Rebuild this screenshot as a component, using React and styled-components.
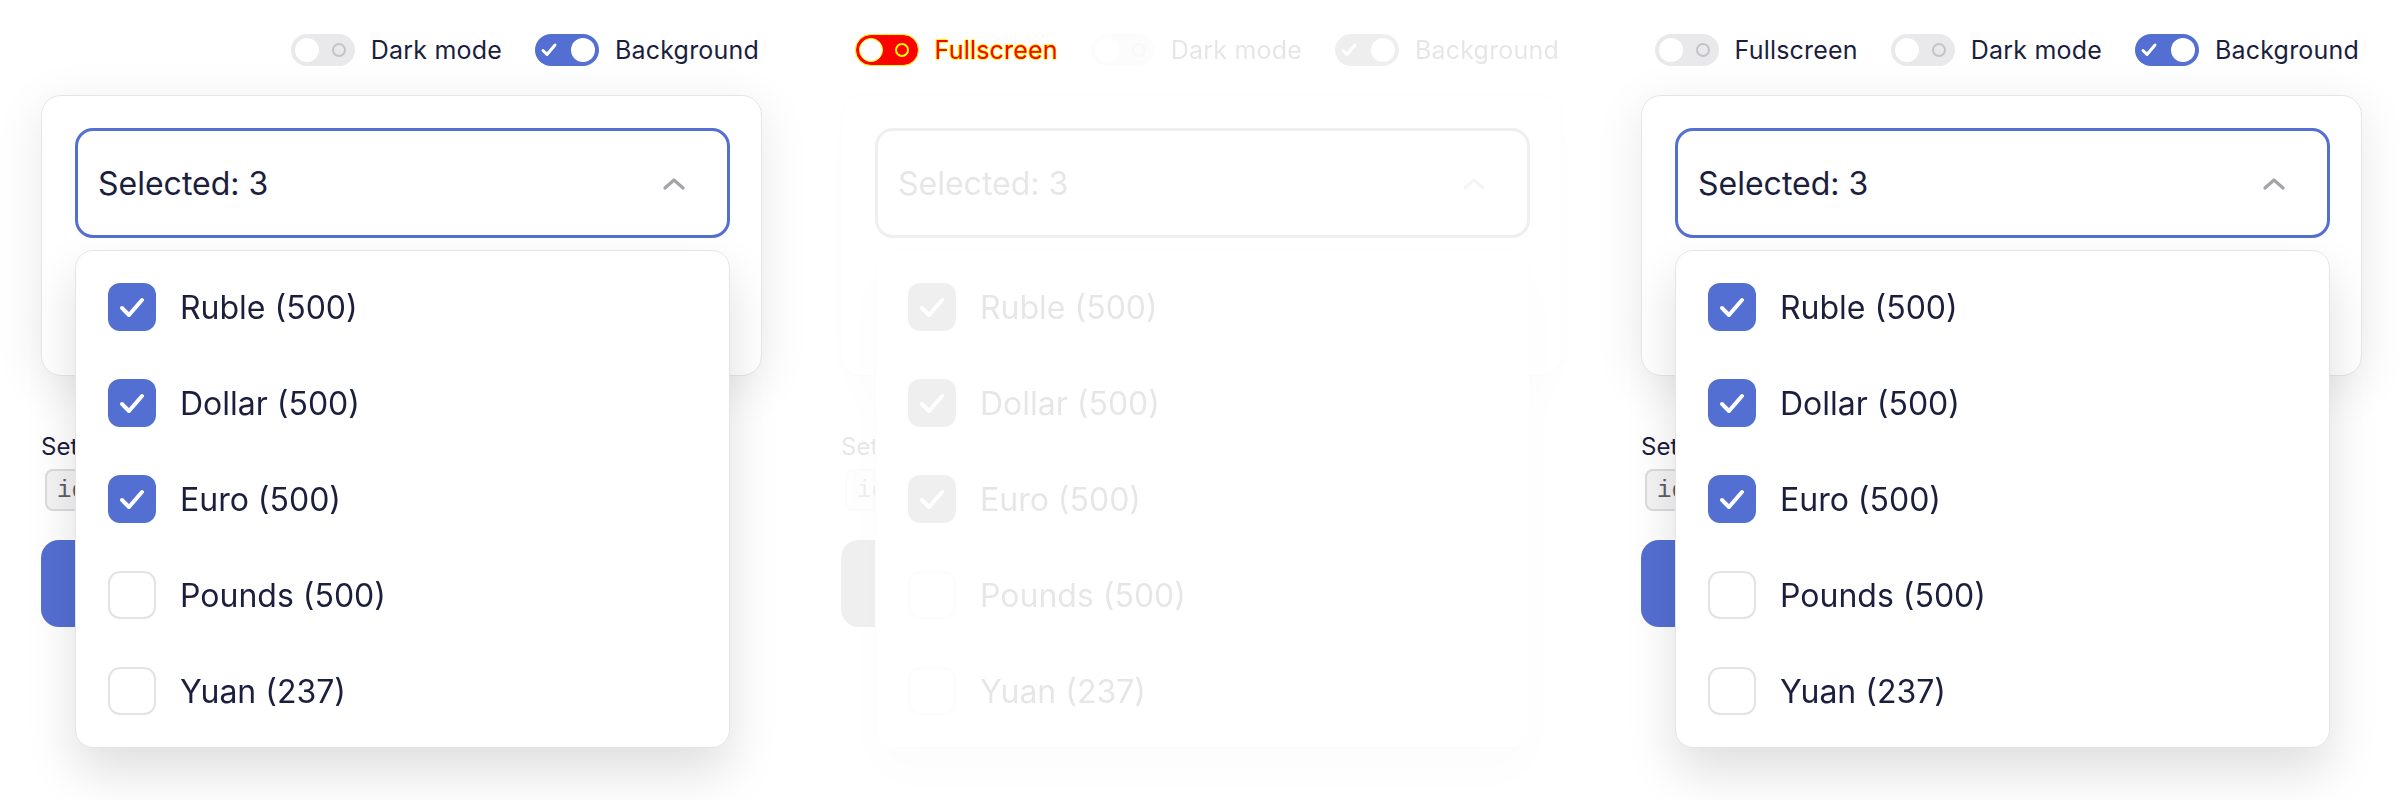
import React from 'react';
import styled, { createGlobalStyle, css } from 'styled-components';

const GlobalStyle = createGlobalStyle`
  html, body {
    margin: 0;
    padding: 0;
    background: #ffffff;
  }
  body {
    font-family: Inter, "Noto Sans", sans-serif;
    color: #1b1e3d;
  }
`;

const BLUE = '#536fd2';
const INK = '#1b1e3d';

const options = [
  { label: 'Ruble (500)', checked: true },
  { label: 'Dollar (500)', checked: true },
  { label: 'Euro (500)', checked: true },
  { label: 'Pounds (500)', checked: false },
  { label: 'Yuan (237)', checked: false },
];

const panels = [
  {
    toggles: [
      { label: 'Dark mode', on: false },
      { label: 'Background', on: true },
    ],
    dim: false,
  },
  {
    toggles: [
      { label: 'Fullscreen', on: false, alert: true },
      { label: 'Dark mode', on: false, dim: true },
      { label: 'Background', on: true, dim: true },
    ],
    dim: true,
  },
  {
    toggles: [
      { label: 'Fullscreen', on: false },
      { label: 'Dark mode', on: false },
      { label: 'Background', on: true },
    ],
    dim: false,
  },
];

const dimmed = css`
  opacity: 0.11;
  filter: grayscale(1);
`;

const Page = styled.div`
  display: flex;
  width: 2400px;
  height: 800px;
  overflow: hidden;
`;

const Column = styled.section`
  width: 800px;
  box-sizing: border-box;
  padding: 34px 38px 0 41px;
  display: flex;
  flex-direction: column;
`;

const ToggleBar = styled.div`
  display: flex;
  justify-content: flex-end;
  align-items: center;
  gap: 33px;
  height: 32px;
  padding-right: 3px;
`;

const ToggleItem = styled.label`
  display: flex;
  align-items: center;
  gap: 16px;
  ${(p) => p.$dim && dimmed}
`;

const Track = styled.span`
  position: relative;
  width: 64px;
  height: 32px;
  box-sizing: border-box;
  border-radius: 16px;
  padding: 4px;
  display: flex;
  align-items: center;
  justify-content: ${(p) => (p.$on ? 'flex-end' : 'flex-start')};
  background: ${(p) => (p.$alert ? '#ff0000' : p.$on ? BLUE : '#e9e9eb')};
  ${(p) => p.$alert && css`
    border: 1px solid #ffff00;
    padding: 3px;
  `}
`;

const Knob = styled.span`
  width: 24px;
  height: 24px;
  border-radius: 50%;
  background: #ffffff;
  box-sizing: border-box;
  ${(p) => p.$alert && css`border: 1px solid #ffff00;`}
`;

const Ring = styled.span`
  position: absolute;
  right: 9px;
  top: 50%;
  width: 14px;
  height: 14px;
  margin-top: -7px;
  box-sizing: border-box;
  border-radius: 50%;
  border: 2px solid ${(p) => (p.$alert ? '#ffff00' : '#c4c4c8')};
`;

const TickMark = styled.svg`
  position: absolute;
  left: 5px;
  top: 50%;
  margin-top: -8px;
`;

const ToggleText = styled.span`
  font-size: 25px;
  line-height: 32px;
  letter-spacing: 0.2px;
  color: ${(p) => (p.$alert ? '#ff0000' : INK)};
  ${(p) => p.$alert && css`
    text-shadow: 0.8px 0 #ffff00, -0.8px 0 #ffff00, 0 0.8px #ffff00, 0 -0.8px #ffff00;
  `}
`;

const Body = styled.div`
  margin-top: 29px;
  display: flex;
  flex-direction: column;
  ${(p) => p.$dim && dimmed}
`;

const Card = styled.div`
  height: 281px;
  box-sizing: border-box;
  padding: 32px;
  background: #ffffff;
  border: 1px solid #e6e6e8;
  border-radius: 20px;
  box-shadow: 0 10px 50px rgba(0, 0, 0, 0.09);
`;

const SelectWrap = styled.div`
  position: relative;
  margin-left: 1px;
  margin-right: -1px;
`;

const SelectBox = styled.div`
  height: 110px;
  box-sizing: border-box;
  border: 3px solid ${BLUE};
  border-radius: 18px;
  padding: 0 42px 0 20px;
  display: flex;
  align-items: center;
  justify-content: space-between;
  font-size: 32px;
  color: ${INK};
  background: #ffffff;
`;

const Dropdown = styled.ul`
  position: absolute;
  z-index: 2;
  left: 0;
  right: 0;
  top: calc(100% + 12px);
  margin: 0;
  padding: 8px 0;
  list-style: none;
  background: #ffffff;
  border: 1px solid #e4e4e6;
  border-radius: 18px;
  box-shadow: 0 24px 50px rgba(0, 0, 0, 0.13);
`;

const Option = styled.li`
  height: 96px;
  display: flex;
  align-items: center;
  gap: 24px;
  padding: 0 32px;
  font-size: 32px;
  color: ${INK};
`;

const Box = styled.span`
  width: 48px;
  height: 48px;
  box-sizing: border-box;
  border-radius: 12px;
  display: flex;
  align-items: center;
  justify-content: center;
  background: ${(p) => (p.$checked ? BLUE : '#ffffff')};
  border: ${(p) => (p.$checked ? 'none' : '2px solid #e3e3e5')};
`;

const Below = styled.div`
  margin-top: 55px;
  display: flex;
  flex-direction: column;
  align-items: flex-start;
`;

const Caption = styled.div`
  font-size: 24px;
  line-height: 32px;
  color: ${INK};
`;

const Code = styled.code`
  margin: 6px 0 0 4px;
  height: 42px;
  box-sizing: border-box;
  display: flex;
  align-items: center;
  padding: 0 10px;
  background: #f4f4f5;
  border: 2px solid #dcdcde;
  border-radius: 8px;
  font-family: "Liberation Mono", "DejaVu Sans Mono", monospace;
  font-size: 24px;
  color: #5c5c66;
`;

const Action = styled.div`
  margin-top: 29px;
  width: 300px;
  height: 87px;
  border-radius: 18px;
  background: ${BLUE};
`;

const Chevron = () => (
  <svg width="22" height="13" viewBox="0 0 22 13" fill="none">
    <polyline points="2,11 11,3 20,11" stroke="#a4a4ac" strokeWidth="3.2" strokeLinecap="round" strokeLinejoin="round" />
  </svg>
);

const Check = () => (
  <svg width="28" height="22" viewBox="0 0 28 22" fill="none">
    <polyline points="4,12 11,19 24,4" stroke="#ffffff" strokeWidth="4" strokeLinecap="round" strokeLinejoin="round" />
  </svg>
);

const Toggle = ({ label, on, alert, dim }) => (
  <ToggleItem $dim={dim}>
    <Track $on={on} $alert={alert}>
      {on && (
        <TickMark width="18" height="16" viewBox="0 0 18 16" fill="none">
          <polyline points="3,8.5 7,12.5 15,3" stroke="#ffffff" strokeWidth="3" strokeLinecap="round" strokeLinejoin="round" />
        </TickMark>
      )}
      <Knob $alert={alert} />
      {!on && <Ring $alert={alert} />}
    </Track>
    <ToggleText $alert={alert}>{label}</ToggleText>
  </ToggleItem>
);

const Panel = ({ toggles, dim }) => (
  <Column>
    <ToggleBar>
      {toggles.map((t) => (
        <Toggle key={t.label} {...t} />
      ))}
    </ToggleBar>
    <Body $dim={dim}>
      <Card>
        <SelectWrap>
          <SelectBox>
            <span>Selected: 3</span>
            <Chevron />
          </SelectBox>
          <Dropdown>
            {options.map((o) => (
              <Option key={o.label}>
                <Box $checked={o.checked}>{o.checked && <Check />}</Box>
                {o.label}
              </Option>
            ))}
          </Dropdown>
        </SelectWrap>
      </Card>
      <Below>
        <Caption>Set values</Caption>
        <Code>ids</Code>
        <Action />
      </Below>
    </Body>
  </Column>
);

export default function App() {
  return (
    <>
      <GlobalStyle />
      <Page>
        {panels.map((p, i) => (
          <Panel key={i} {...p} />
        ))}
      </Page>
    </>
  );
}
